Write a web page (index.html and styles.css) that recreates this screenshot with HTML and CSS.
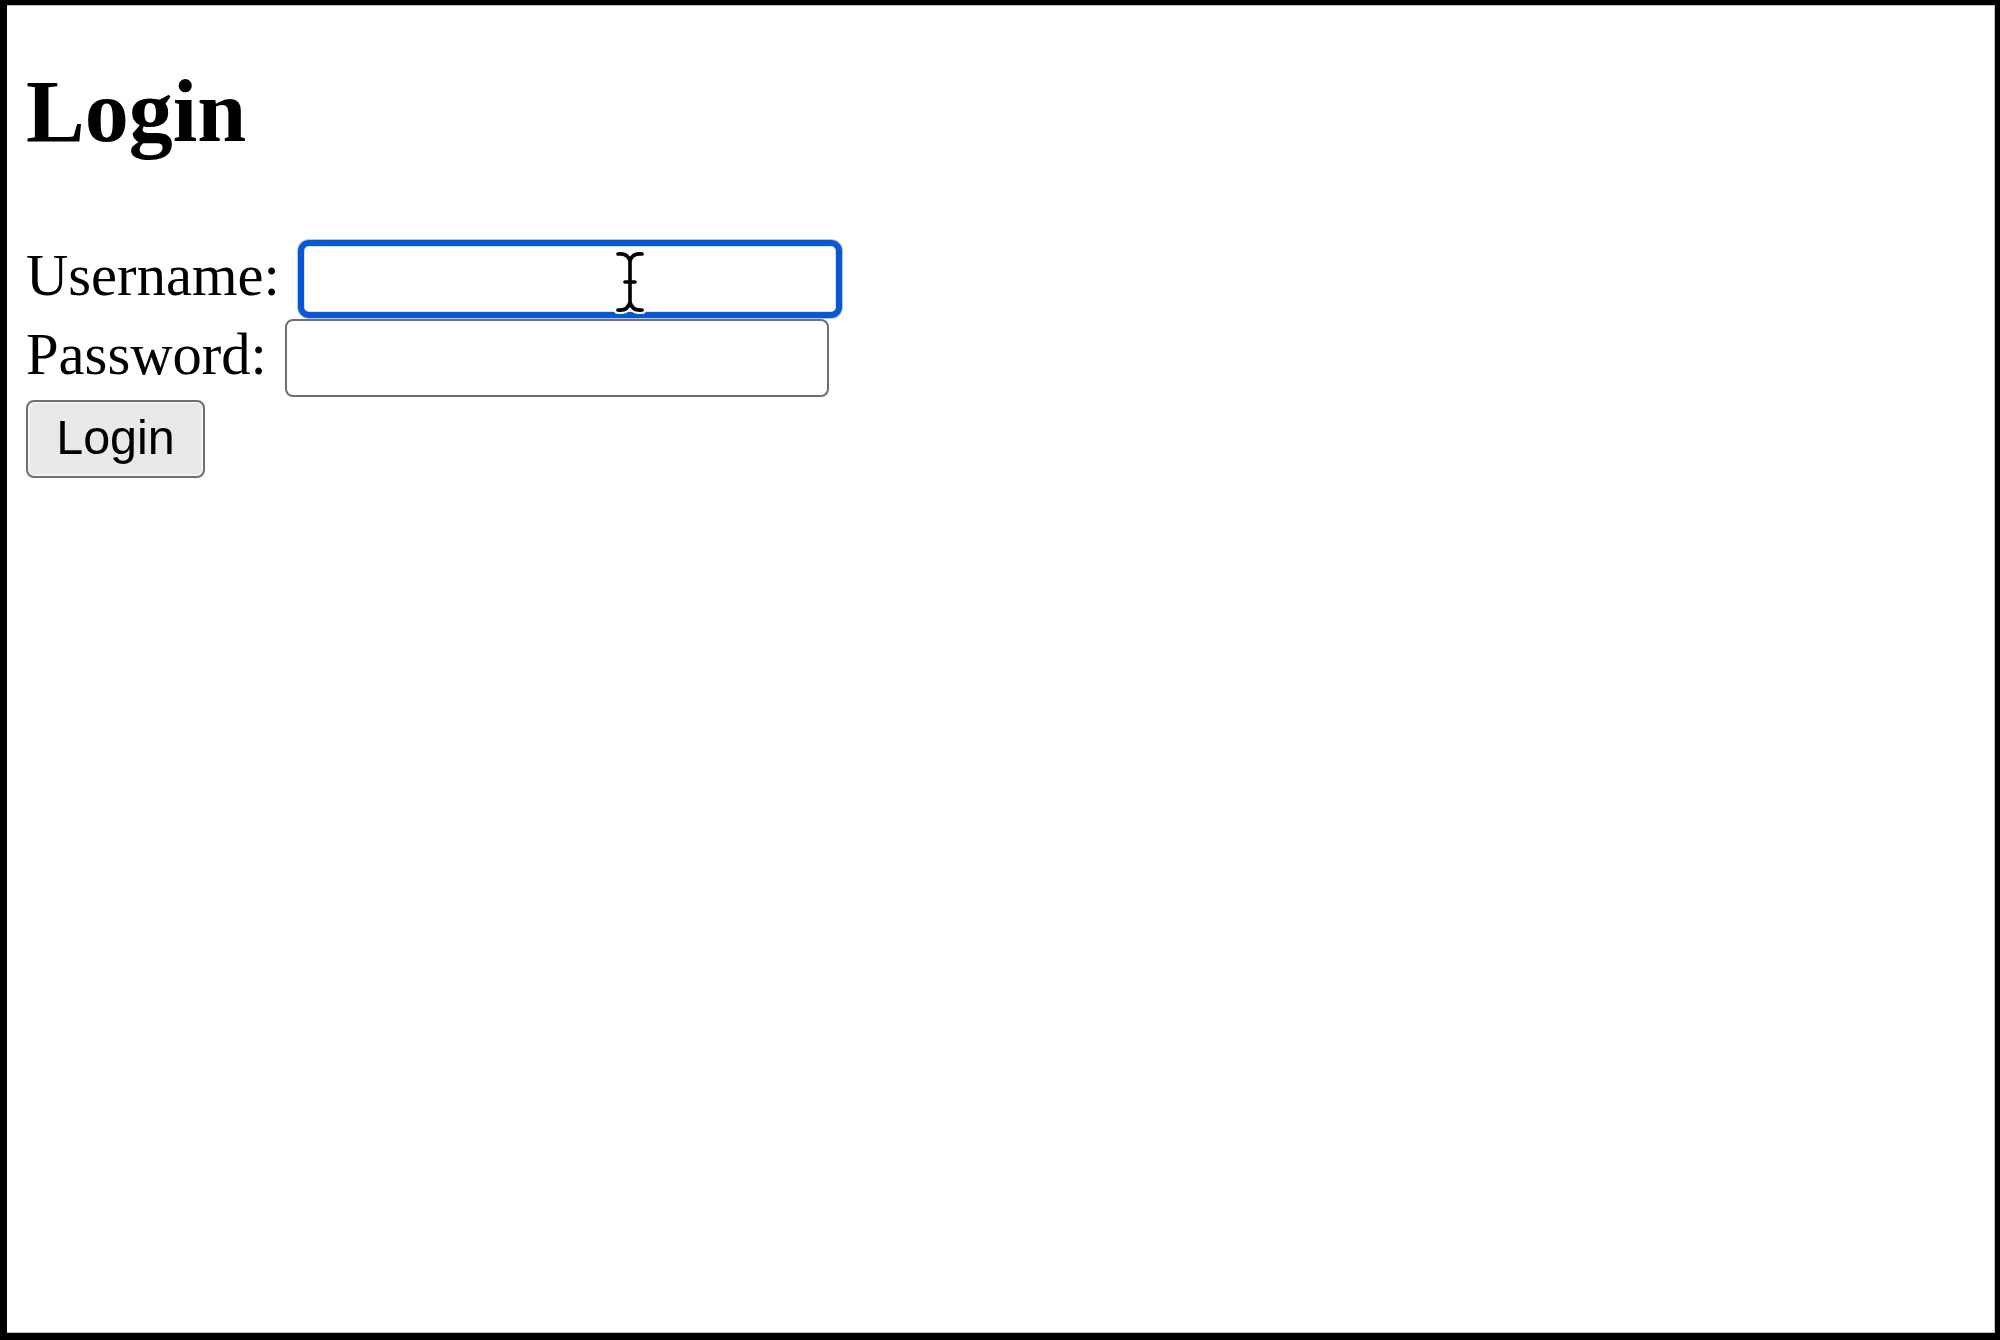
FILE: index.html
```html
<!DOCTYPE html>
<html lang="en">
<head>
    <meta charset="UTF-8">
    <meta name="viewport" content="width=device-width, initial-scale=1.0">
    <title>Login</title>
    <link rel="stylesheet" href="styles.css">
</head>
<body>
    <h2>Login</h2>

    <form id="loginForm" class="login-form">
        <div class="form-row">
            <label for="username">Username:</label>
            <div class="field">
                <input type="text" id="username" class="is-focused">
                <!-- text cursor over the field -->
                <svg class="ibeam" width="32" height="64" viewBox="0 0 32 64">
                    <g fill="none" stroke-linecap="round">
                        <path d="M4 4 Q14 3 16 11 Q18 3 28 4 M16 11 V53 M11 32 H21 M4 60 Q14 61 16 52 Q18 61 28 60" stroke="#fff" stroke-width="8"/>
                        <path d="M4 4 Q14 3 16 11 Q18 3 28 4 M16 11 V53 M11 32 H21 M4 60 Q14 61 16 52 Q18 61 28 60" stroke="#000" stroke-width="3.6"/>
                    </g>
                </svg>
            </div>
        </div>
        <div class="form-row">
            <label for="password">Password:</label>
            <input type="password" id="password">
        </div>
        <button type="submit" class="btn">Login</button>
    </form>
</body>
</html>
```

FILE: styles.css
```css
html {
    background: #000;
    margin: 0;
}
body {
    box-sizing: border-box;
    height: calc(100vh - 12px);
    margin: 5px 5px 7px 7px;
    padding: 0 19px;
    background: #fff;
    border-top: 1px solid #c4c4c4;
    border-right: 1px solid #c4c4c4;
    border-bottom: 1px solid #c4c4c4;
    font-family: "Liberation Serif", "Times New Roman", serif;
    color: #000;
    overflow: hidden;
}
h2 {
    font-size: 88px;
    line-height: 1;
    font-weight: bold;
    margin: 62px 0 84px;
}
.login-form {
    display: flex;
    flex-direction: column;
    align-items: flex-start;
    gap: 1px;
}
.form-row {
    display: flex;
    align-items: center;
    gap: 18.5px;
    height: 78px;
}
label {
    font-size: 58.6px;
    line-height: 58px;
    padding-bottom: 7px;
}
.field {
    position: relative;
}
input[type="text"],
input[type="password"] {
    box-sizing: border-box;
    display: block;
    width: 544px;
    height: 78px;
    margin: 0;
    padding: 0 10px;
    border: 2.5px solid #6f6f6f;
    border-radius: 8px;
    background: #fff;
    font-family: "Liberation Sans", Arial, sans-serif;
    font-size: 48px;
    outline: none;
}
input.is-focused {
    border: 6.5px solid #0b57d0;
    border-radius: 11px;
    box-shadow: 0 0 0 1px #a9c8f3, inset 0 0 0 1px #cfe2fb;
}
.ibeam {
    position: absolute;
    left: 316px;
    top: 10px;
}
.btn {
    box-sizing: border-box;
    width: 179px;
    height: 78px;
    margin-top: 2px;
    padding: 0 0 4px 0;
    border: 2.5px solid #6f6f6f;
    border-radius: 8px;
    background: #e8e8e8;
    box-shadow: inset 0 0 0 1.5px #f6f6f6;
    color: #000;
    font-family: "Liberation Sans", Arial, sans-serif;
    font-size: 48.5px;
    cursor: pointer;
}
```
